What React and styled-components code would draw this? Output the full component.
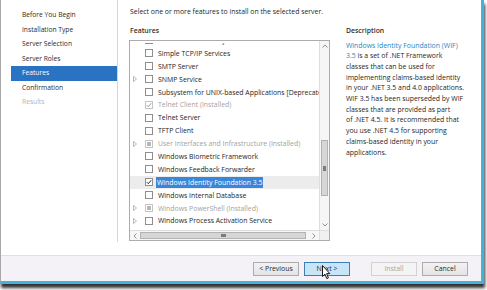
import styled, { createGlobalStyle, css } from "styled-components";

const GlobalStyle = createGlobalStyle`
  html, body { margin: 0; padding: 0; }
  body {
    width: 487px;
    height: 290px;
    overflow: hidden;
    background: #ffffff;
    font-family: "Open Sans", "Noto Sans", sans-serif;
    color: #1e1e1e;
  }
`;

const navItems = [
  { label: "Before You Begin" },
  { label: "Installation Type" },
  { label: "Server Selection" },
  { label: "Server Roles" },
  { label: "Features", active: true },
  { label: "Confirmation" },
  { label: "Results", disabled: true },
];

const features = [
  { label: "RPC over HTTP Proxy" },
  { label: "Simple TCP/IP Services" },
  { label: "SMTP Server" },
  { label: "SNMP Service", expander: true },
  { label: "Subsystem for UNIX-based Applications [Deprecated]" },
  { label: "Telnet Client (Installed)", state: "checked", installed: true },
  { label: "Telnet Server" },
  { label: "TFTP Client" },
  { label: "User Interfaces and Infrastructure (Installed)", state: "partial", installed: true, expander: true },
  { label: "Windows Biometric Framework" },
  { label: "Windows Feedback Forwarder" },
  { label: "Windows Identity Foundation 3.5", state: "checked", selected: true },
  { label: "Windows Internal Database" },
  { label: "Windows PowerShell (Installed)", state: "partial", installed: true, expander: true },
  { label: "Windows Process Activation Service", expander: true },
  { label: "Windows Search Service" },
];

function App() {
  return (
    <>
      <GlobalStyle />
      <Window>
        <Body>
          <Nav>
            {navItems.map((item) => (
              <NavItem key={item.label} $active={item.active} $disabled={item.disabled}>
                {item.label}
              </NavItem>
            ))}
          </Nav>
          <Main>
            <Instruction>Select one or more features to install on the selected server.</Instruction>
            <Columns>
              <FeaturesCol>
                <Heading>Features</Heading>
                <ListBox>
                  <Viewport>
                    <Rows>
                      {features.map((f) => (
                        <Row key={f.label} $selected={f.selected}>
                          <Expander>
                            {f.expander && (
                              <svg width="4" height="6" viewBox="0 0 4 6">
                                <path d="M0.5 0.5 L3.5 3 L0.5 5.5 Z" fill="none" stroke="#a6a6a6" strokeWidth="0.8" />
                              </svg>
                            )}
                          </Expander>
                          <Check $installed={f.installed}>
                            {f.state === "checked" && (
                              <svg width="6" height="6" viewBox="0 0 6 6">
                                <path d="M0.8 3.2 L2.3 4.7 L5.2 1.2" fill="none" stroke={f.installed ? "#9a9a9a" : "#202020"} strokeWidth="1" />
                              </svg>
                            )}
                            {f.state === "partial" && <Partial />}
                          </Check>
                          <Label $installed={f.installed} $selected={f.selected}>
                            {f.label}
                          </Label>
                        </Row>
                      ))}
                    </Rows>
                  </Viewport>
                  <VScroll>
                    <ArrowCell>
                      <svg width="6" height="4" viewBox="0 0 6 4">
                        <path d="M0.5 3.5 L3 1 L5.5 3.5" fill="none" stroke="#7a7a7a" strokeWidth="0.8" />
                      </svg>
                    </ArrowCell>
                    <VThumb>
                      <Grip $vertical />
                    </VThumb>
                    <Track />
                    <ArrowCell>
                      <svg width="6" height="4" viewBox="0 0 6 4">
                        <path d="M0.5 0.5 L3 3 L5.5 0.5" fill="none" stroke="#7a7a7a" strokeWidth="0.8" />
                      </svg>
                    </ArrowCell>
                  </VScroll>
                  <HScroll>
                    <ArrowCell>
                      <svg width="4" height="6" viewBox="0 0 4 6">
                        <path d="M3.5 0.5 L1 3 L3.5 5.5" fill="none" stroke="#7a7a7a" strokeWidth="0.8" />
                      </svg>
                    </ArrowCell>
                    <HThumb>
                      <Grip />
                    </HThumb>
                    <ArrowCell>
                      <svg width="4" height="6" viewBox="0 0 4 6">
                        <path d="M0.5 0.5 L3 3 L0.5 5.5" fill="none" stroke="#7a7a7a" strokeWidth="0.8" />
                      </svg>
                    </ArrowCell>
                  </HScroll>
                  <Corner />
                </ListBox>
              </FeaturesCol>
              <DescCol>
                <Heading>Description</Heading>
                <DescText>
                  <Link>Windows Identity Foundation (WIF)</Link>
                  <br />
                  <Link>3.5</Link> is a set of .NET Framework
                  <br />
                  classes that can be used for
                  <br />
                  implementing claims-based identity
                  <br />
                  in your .NET 3.5 and 4.0 applications.
                  <br />
                  WIF 3.5 has been superseded by WIF
                  <br />
                  classes that are provided as part
                  <br />
                  of .NET 4.5. It is recommended that
                  <br />
                  you use .NET 4.5 for supporting
                  <br />
                  claims-based identity in your
                  <br />
                  applications.
                </DescText>
              </DescCol>
            </Columns>
          </Main>
        </Body>
        <Footer>
          <Button>&lt; Previous</Button>
          <Button $primary>Next &gt;</Button>
          <Button $disabled $spaced>Install</Button>
          <Button>Cancel</Button>
          <Cursor width="9" height="15" viewBox="0 0 9 15">
            <path d="M0.5 0.5 L0.5 11.5 L3 9.2 L4.8 13.6 L6.4 12.9 L4.6 8.6 L7.8 8.6 Z" fill="#ffffff" stroke="#000000" strokeWidth="0.9" strokeLinejoin="round" />
          </Cursor>
        </Footer>
      </Window>
    </>
  );
}

export default App;

const Window = styled.div`
  box-sizing: border-box;
  width: 484px;
  height: 284px;
  display: flex;
  flex-direction: column;
  background: #ffffff;
  border-left: 1px solid #a8a8a8;
  border-right: 3px solid #43b2dd;
  border-bottom: 3px solid #43b2dd;
  box-shadow: 1px 4px 3px rgba(0, 0, 0, 0.8);
`;

const Body = styled.div`
  box-sizing: border-box;
  height: 255px;
  display: flex;
  padding-bottom: 13px;
`;

const Nav = styled.nav`
  width: 116px;
  flex-shrink: 0;
  padding-top: 8px;
  border-right: 1px solid #d6d6d6;
`;

const NavItem = styled.div`
  margin-left: 10px;
  padding-left: 11px;
  height: 14.5px;
  line-height: 14.5px;
  font-size: 6.7px;
  color: #2a2a2a;
  white-space: nowrap;
  ${(p) =>
    p.$active &&
    css`
      background: #2a72c2;
      color: #ffffff;
    `}
  ${(p) =>
    p.$disabled &&
    css`
      color: #b4b4b4;
    `}
`;

const Main = styled.main`
  flex: 1;
  padding: 7px 0 0 11px;
`;

const Instruction = styled.div`
  margin-left: 1px;
  font-size: 6.9px;
  line-height: 10px;
  white-space: nowrap;
`;

const Columns = styled.div`
  display: flex;
  gap: 15px;
  margin-top: 9px;
`;

const FeaturesCol = styled.div`
  width: 201px;
  display: flex;
  flex-direction: column;
  gap: 4px;
`;

const Heading = styled.div`
  margin-left: 1px;
  font-size: 6.9px;
  font-weight: 600;
  line-height: 10px;
  color: #303030;
`;

const ListBox = styled.div`
  box-sizing: border-box;
  width: 201px;
  height: 201px;
  border: 1px solid #acacac;
  display: grid;
  grid-template-columns: 1fr 10px;
  grid-template-rows: 1fr 10px;
`;

const Viewport = styled.div`
  overflow: hidden;
  border-top: 2px solid #ffffff;
`;

const Rows = styled.div`
  margin-top: -9px;
`;

const Row = styled.div`
  display: flex;
  align-items: center;
  height: 12.9px;
  white-space: nowrap;
  background: ${(p) => (p.$selected ? "#ececec" : "transparent")};
`;

const Expander = styled.div`
  width: 15px;
  flex-shrink: 0;
  display: flex;
  align-items: center;
  padding-left: 3px;
  box-sizing: border-box;
`;

const Check = styled.div`
  box-sizing: border-box;
  width: 8px;
  height: 8px;
  flex-shrink: 0;
  border: 1px solid ${(p) => (p.$installed ? "#c4c4c4" : "#8e8e8e")};
  background: #ffffff;
  display: flex;
  align-items: center;
  justify-content: center;
`;

const Partial = styled.div`
  width: 4px;
  height: 4px;
  background: #b8b8b8;
`;

const Label = styled.span`
  margin-left: 4px;
  font-size: 6.9px;
  line-height: 11px;
  padding: 0 1px;
  color: ${(p) => (p.$installed ? "#a2a2a2" : "#1e1e1e")};
  ${(p) =>
    p.$selected &&
    css`
      margin-left: 3px;
      background: #3a86d8;
      color: #ffffff;
    `}
`;

const VScroll = styled.div`
  grid-row: 1;
  grid-column: 2;
  display: flex;
  flex-direction: column;
  border-left: 1px solid #dedede;
  background: #f6f6f6;
`;

const ArrowCell = styled.div`
  width: 100%;
  height: 10px;
  flex: 0 0 10px;
  display: flex;
  align-items: center;
  justify-content: center;
`;

const VThumb = styled.div`
  box-sizing: border-box;
  margin-top: 89px;
  height: 56px;
  margin-left: 1px;
  margin-right: 1px;
  background: #d6d6d6;
  border: 1px solid #b2b2b2;
  display: flex;
  align-items: center;
  justify-content: center;
`;

const Track = styled.div`
  flex: 1;
`;

const Grip = styled.div`
  width: ${(p) => (p.$vertical ? "3px" : "5px")};
  height: ${(p) => (p.$vertical ? "5px" : "3px")};
  background: #7c7c7c;
`;

const HScroll = styled.div`
  grid-row: 2;
  grid-column: 1;
  display: flex;
  border-top: 1px solid #dedede;
  background: #f6f6f6;
`;

const HThumb = styled.div`
  box-sizing: border-box;
  flex: 1;
  margin: 1px 3px 1px 0;
  background: #d6d6d6;
  border: 1px solid #b2b2b2;
  display: flex;
  align-items: center;
  justify-content: center;
`;

const Corner = styled.div`
  grid-row: 2;
  grid-column: 2;
  background: #f0f0f0;
  border-left: 1px solid #dedede;
  border-top: 1px solid #dedede;
`;

const DescCol = styled.div`
  display: flex;
  flex-direction: column;
`;

const DescText = styled.div`
  margin-top: 4.5px;
  margin-left: 1px;
  font-size: 6.9px;
  line-height: 10.7px;
  color: #262626;
  white-space: nowrap;
`;

const Link = styled.span`
  color: #2a86bf;
`;

const Footer = styled.footer`
  position: relative;
  box-sizing: border-box;
  height: 26px;
  display: flex;
  align-items: center;
  justify-content: flex-end;
  gap: 5px;
  padding-right: 13px;
  background: #f4f2f6;
  border-top: 1px solid #dfdfdf;
`;

const Button = styled.button`
  box-sizing: border-box;
  width: 46px;
  height: 14px;
  padding: 0;
  font-family: "Open Sans", "Noto Sans", sans-serif;
  font-size: 6.9px;
  color: #2a2a2a;
  border: 1px solid #acacac;
  background: linear-gradient(#f2f2f2, #e4e4e4);
  ${(p) =>
    p.$primary &&
    css`
      background: #c8e5f8;
      border-color: #3d80b3;
    `}
  ${(p) =>
    p.$disabled &&
    css`
      background: #f4f4f4;
      border-color: #d2d2d2;
      color: #a6a6a6;
    `}
  ${(p) =>
    p.$spaced &&
    css`
      margin-left: 16px;
    `}
`;

const Cursor = styled.svg`
  position: absolute;
  left: 321px;
  top: 9px;
`;
